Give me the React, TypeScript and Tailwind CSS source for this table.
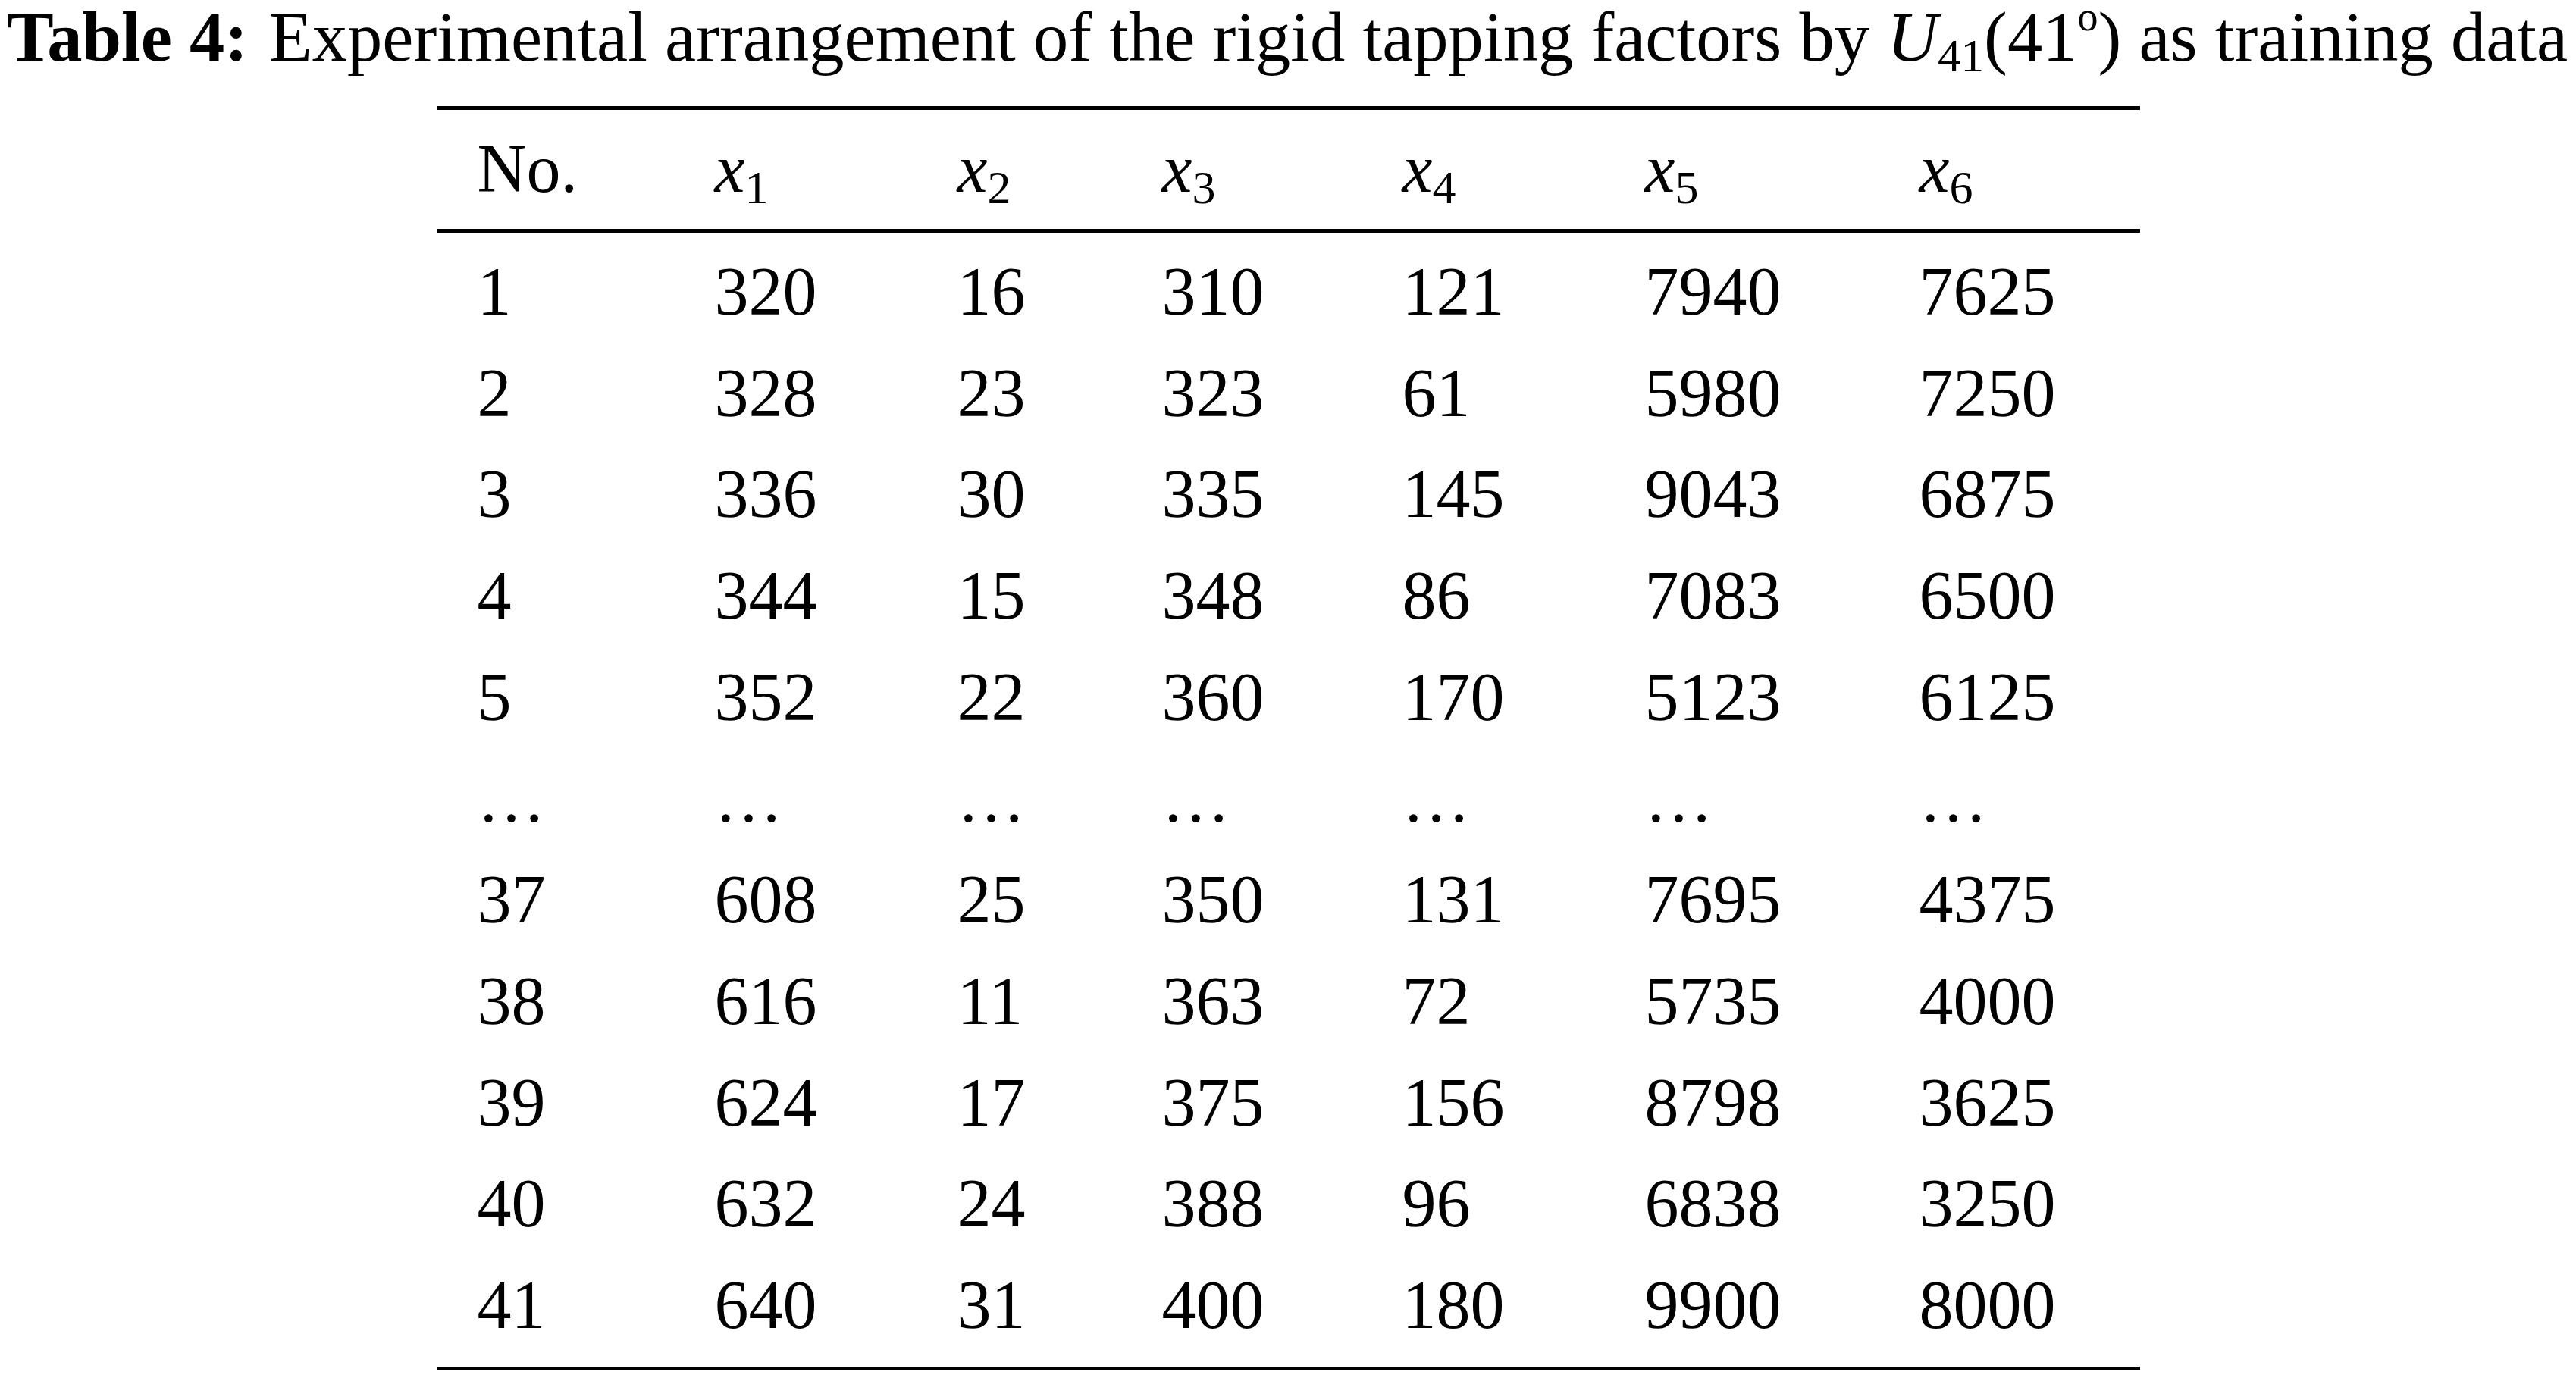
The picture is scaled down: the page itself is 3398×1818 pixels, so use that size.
const rows: string[][] = [
  ['1', '320', '16', '310', '121', '7940', '7625'],
  ['2', '328', '23', '323', '61', '5980', '7250'],
  ['3', '336', '30', '335', '145', '9043', '6875'],
  ['4', '344', '15', '348', '86', '7083', '6500'],
  ['5', '352', '22', '360', '170', '5123', '6125'],
  ['…', '…', '…', '…', '…', '…', '…'],
  ['37', '608', '25', '350', '131', '7695', '4375'],
  ['38', '616', '11', '363', '72', '5735', '4000'],
  ['39', '624', '17', '375', '156', '8798', '3625'],
  ['40', '632', '24', '388', '96', '6838', '3250'],
  ['41', '640', '31', '400', '180', '9900', '8000'],
];

const cols = 'grid grid-cols-[313px_320px_270px_317px_320px_362px_1fr] pl-[54px]';

function Xvar({ n }: { n: number }) {
  return (
    <span className="whitespace-nowrap">
      <i>x</i>
      <span className="relative top-[15px] text-[62px] leading-none">{n}</span>
    </span>
  );
}

export default function App() {
  return (
    <div className="min-h-screen bg-white text-black font-['Liberation_Serif','Times_New_Roman',serif] text-[90px]">
      <p className="pl-[9px] pt-[4px] text-[92.6px] leading-[90px] whitespace-nowrap">
        <span className="font-bold">Table 4:</span>
        <span className="ml-[28px]">
          Experimental arrangement of the rigid tapping factors by <i>U</i>
          <span className="relative top-[14px] text-[61px] leading-none">41</span>
          (41
          <span className="relative -top-[40px] text-[54px] leading-none">o</span>) as training data
        </span>
      </p>

      <div className="mx-auto mt-[46px] w-[2247px]">
        <div className="h-[5px] bg-black" />
        <div className={`${cols} pt-[11px] pb-[12px] leading-[134px]`}>
          <div>No.</div>
          {[1, 2, 3, 4, 5, 6].map((n) => (
            <div key={n}>
              <Xvar n={n} />
            </div>
          ))}
        </div>
        <div className="h-[5px] bg-black" />
        <div className="pt-[11px] pb-[14px]">
          {rows.map((r, i) => (
            <div key={i} className={`${cols} leading-[133.7px]`}>
              {r.map((c, j) => (
                <div key={j}>{c}</div>
              ))}
            </div>
          ))}
        </div>
        <div className="h-[5px] bg-black" />
      </div>
    </div>
  );
}
